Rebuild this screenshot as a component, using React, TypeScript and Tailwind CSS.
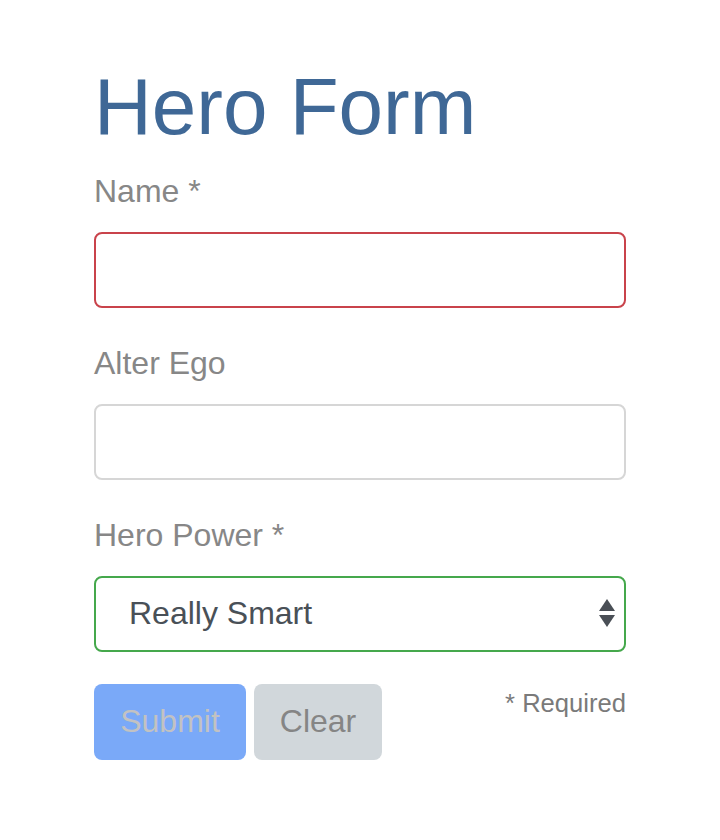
import React from "react";

export default function App() {
  return (
    <div
      className="min-h-[840px] w-[720px] bg-white"
      style={{ fontFamily: '"Liberation Sans", Arial, Helvetica, sans-serif' }}
    >
      <div className="ml-[94px] w-[532px] pt-[59px]">
        <h1 className="mb-[13px] text-[80px] font-normal leading-[96px] text-[#3f6896]">
          Hero Form
        </h1>

        <div className="mb-[32px]">
          <label className="mb-[18px] block text-[32px] leading-[46px] text-[#878787]">
            Name *
          </label>
          <div className="h-[76px] w-full rounded-[8px] border-2 border-[#c9434b] bg-white" />
        </div>

        <div className="mb-[32px]">
          <label className="mb-[18px] block text-[32px] leading-[46px] text-[#878787]">
            Alter Ego
          </label>
          <div className="h-[76px] w-full rounded-[8px] border-2 border-[#d6d6d6] bg-white" />
        </div>

        <div className="mb-[32px]">
          <label className="mb-[18px] block text-[32px] leading-[46px] text-[#878787]">
            Hero Power *
          </label>
          <div className="flex h-[76px] w-full items-center justify-between rounded-[8px] border-2 border-[#45a84c] bg-white pb-[2px] pl-[33px] pr-[8px]">
            <span className="text-[32px] leading-[48px] text-[#495057]">Really Smart</span>
            <svg width="18" height="32" viewBox="0 0 18 32">
              <polygon points="9,2 17,14 1,14" fill="#4a4f56" />
              <polygon points="1,18 17,18 9,30" fill="#4a4f56" />
            </svg>
          </div>
        </div>

        <div className="flex items-start">
          <button className="h-[76px] w-[152px] rounded-[8px] bg-[#7aa9f8] pb-[3px] text-[32px] text-[#c2c2c2]">
            Submit
          </button>
          <button className="ml-[8px] h-[76px] w-[128px] rounded-[8px] bg-[#d1d7db] pb-[3px] text-[32px] text-[#858585]">
            Clear
          </button>
          <span className="ml-auto text-[25.6px] leading-[38px] text-[#7a7a7a]">* Required</span>
        </div>
      </div>
    </div>
  );
}
